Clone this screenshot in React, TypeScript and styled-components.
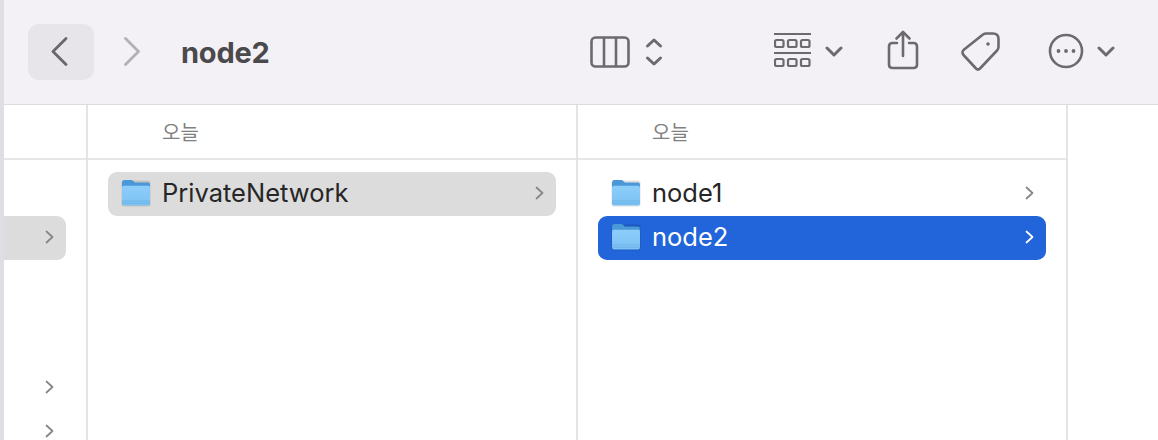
import styled, { createGlobalStyle } from "styled-components";

const GlobalStyle = createGlobalStyle`
  html, body { margin: 0; padding: 0; background: #fff; overflow: hidden; }
  body { font-family: Inter, "Noto Sans CJK KR", sans-serif; }
`;

const Window = styled.div`
  width: 1158px; height: 440px; display: flex; overflow: hidden;
`;

const Edge = styled.div`
  width: 4px; flex: none; background: #e0dee3;
`;

const Main = styled.div`
  flex: 1; min-width: 0; display: flex; flex-direction: column;
`;

const Toolbar = styled.header`
  height: 104px; flex: none; display: flex; align-items: center;
  padding-left: 24px; background: #f3f1f6; border-bottom: 1px solid #dddbdf;
`;

const NavButton = styled.div<{ $active?: boolean }>`
  width: ${p => (p.$active ? 66 : 74)}px; height: 56px; flex: none;
  display: flex; align-items: center; justify-content: center;
  border-radius: 11px; background: ${p => (p.$active ? "#e7e5ea" : "transparent")};
  color: ${p => (p.$active ? "#69676c" : "#b1b0b4")};
`;

const Title = styled.h1`
  flex: 1; margin: 0 0 0 13px; font-size: 29px; font-weight: 700; color: #4a494c;
  letter-spacing: -0.2px;
`;

const ToolIcon = styled.svg<{ $left: number; $weight?: number; $right?: number }>`
  flex: none; height: 44px; margin-left: ${p => p.$left}px; margin-right: ${p => p.$right ?? 0}px;
  color: #6c6a70; fill: none; stroke: currentColor; stroke-width: ${p => p.$weight ?? 2.6};
  stroke-linecap: round; stroke-linejoin: round;
`;

const Browser = styled.div`
  flex: 1; min-height: 0; display: flex;
`;

const Column = styled.section<{ $width: number }>`
  width: ${p => p.$width}px; flex: none; box-sizing: border-box;
  border-right: 2px solid #e4e3e5;
`;

const ColumnHeader = styled.div`
  height: 55px; box-sizing: border-box; padding-left: 74px;
  display: flex; align-items: center;
  border-bottom: 2px solid #e6e6e6;
  font-family: "Noto Sans CJK KR", sans-serif; font-size: 20px; color: #808080;
`;

const RowList = styled.div<{ $narrow?: boolean }>`
  padding: 12px 20px 0 ${p => (p.$narrow ? 0 : 20)}px;
  display: flex; flex-direction: column;
`;

const Row = styled.div<{ $state?: "selected" | "parent"; $narrow?: boolean; $top?: number }>`
  height: 44px; flex: none; box-sizing: border-box; padding: 0 12px 2px 13px;
  margin-top: ${p => p.$top ?? 0}px;
  display: flex; align-items: center;
  border-radius: ${p => (p.$narrow ? "0 9px 9px 0" : "9px")};
  background: ${p => p.$state === "selected" ? "#2264d9" : p.$state === "parent" ? "#dcdcdc" : "transparent"};
  color: ${p => (p.$state === "selected" ? "#ffffff" : "#262626")};
`;

const RowName = styled.span`
  flex: 1; margin-left: 11px; font-size: 25.5px; line-height: 30px;
`;

const Chevron = styled.svg<{ $light?: boolean }>`
  flex: none; margin-left: auto; width: 9px; height: 14px;
  fill: none; stroke: ${p => (p.$light ? "#ffffff" : "#858585")}; stroke-width: 1.7;
  stroke-linecap: round; stroke-linejoin: round;
`;

const RowChevron = ({ light }: { light?: boolean }) => (
    <Chevron $light={light} viewBox="0 0 9 14">
        <path d="M1.5 1.5 L7.5 7 L1.5 12.5" />
    </Chevron>
);

const FolderIcon = ({ id }: { id: string }) => (
    <svg width="30" height="28" viewBox="0 0 30 28" style={{ flex: "none" }}>
        <defs>
            <linearGradient id={`${id}-body`} x1="0" y1="0" x2="0" y2="1">
                <stop offset="0" stopColor="#8ccdfa" />
                <stop offset="1" stopColor="#7cc2f5" />
            </linearGradient>
        </defs>
        <rect x="0.5" y="1.5" width="29" height="26" rx="2.5" fill="#000" opacity="0.12" />
        <path d="M1 4 Q1 1 3.5 1 L10 1 Q11.5 1 12.5 2.2 L13.8 3.6 L27 3.6 Q29 3.6 29 6 L29 10 L1 10 Z" fill="#4a98d8" />
        <path d="M1 8.5 Q1 6.800 3 6.800 L27 6.800 Q29 6.800 29 8.500 L29 24.500 Q29 26.500 27 26.500 L3 26.500 Q1 26.500 1 24.500 Z" fill={`url(#${id}-body)`} />
        <path d="M1 22 H29 M1 24.300 H29" stroke="#64a9de" strokeWidth="0.8" opacity="0.7" />
    </svg>
);

export default function App() {
    return (
        <Window>
            <GlobalStyle />
            <Edge />
            <Main>
                <Toolbar>
                    <NavButton $active>
                        <svg width="20" height="30" viewBox="0 0 20 30" fill="none" stroke="currentColor" strokeWidth="2.8" strokeLinecap="round" strokeLinejoin="round">
                            <path d="M15 1.500 L2 14.500 L15 27.500" />
                        </svg>
                    </NavButton>
                    <NavButton>
                        <svg width="20" height="30" viewBox="0 0 20 30" fill="none" stroke="currentColor" strokeWidth="2.8" strokeLinecap="round" strokeLinejoin="round">
                            <path d="M4.500 1.500 L17.500 14.500 L4.500 27.500" />
                        </svg>
                    </NavButton>
                    <Title>node2</Title>

                    {/* view switcher */}
                    <ToolIcon $left={0} width="40" viewBox="0 0 40 44">
                        <rect x="1.500" y="7.500" width="37" height="29" rx="4" />
                        <path d="M14 8 V36 M26 8 V36" />
                    </ToolIcon>
                    <ToolIcon $left={15} $weight={3} width="18" viewBox="0 0 18 44">
                        <path d="M2.500 16 L9 10 L15.500 16 M2.500 28 L9 34 L15.500 28" />
                    </ToolIcon>

                    {/* group by */}
                    <ToolIcon $left={111} $weight={2.2} width="37" viewBox="0 0 37 44">
                        <path d="M0.500 4 H36.500 M0.500 23 H36.500" />
                        <rect x="1" y="10" width="8.500" height="7" rx="1.500" />
                        <rect x="14" y="10" width="8.500" height="7" rx="1.500" />
                        <rect x="27" y="10" width="8.500" height="7" rx="1.500" />
                        <rect x="1" y="29" width="8.500" height="7" rx="1.500" />
                        <rect x="14" y="29" width="8.500" height="7" rx="1.500" />
                        <rect x="27" y="29" width="8.500" height="7" rx="1.500" />
                    </ToolIcon>
                    <ToolIcon $left={14} $weight={3} width="18" viewBox="0 0 18 44">
                        <path d="M2 18 L9 25 L16 18" />
                    </ToolIcon>

                    {/* share */}
                    <ToolIcon $left={44} width="32" viewBox="0 0 32 44">
                        <path d="M10 13 H5.500 Q2 13 2 16.500 V34.500 Q2 38 5.500 38 H26.500 Q30 38 30 34.500 V16.500 Q30 13 26.500 13 H22" />
                        <path d="M16 26 V2.500 M9.500 8.500 L16 2 L22.500 8.500" />
                    </ToolIcon>

                    {/* tag */}
                    <ToolIcon $left={42} width="40" viewBox="0 0 40 44">
                        <path d="M2.500 20 L22 4.500 Q23.500 3.500 25 3.500 L32 3.500 Q37.500 3.500 37.500 9 L37.500 17 Q37.500 19 36 20.500 L19 38.500 Q17 40.500 15 38.500 L2.500 25 Q0.500 22.500 2.500 20 Z" />
                        <circle cx="27" cy="14" r="1.800" fill="currentColor" stroke="none" />
                    </ToolIcon>

                    {/* more */}
                    <ToolIcon $left={47} width="36" viewBox="0 0 36 44">
                        <circle cx="18" cy="21" r="16" />
                        <circle cx="10.500" cy="21" r="1.900" fill="currentColor" stroke="none" />
                        <circle cx="18" cy="21" r="1.900" fill="currentColor" stroke="none" />
                        <circle cx="25.500" cy="21" r="1.900" fill="currentColor" stroke="none" />
                    </ToolIcon>
                    <ToolIcon $left={13} $right={43} $weight={3} width="18" viewBox="0 0 18 44">
                        <path d="M2 18 L9 25 L16 18" />
                    </ToolIcon>
                </Toolbar>

                <Browser>
                    <Column $width={84}>
                        <ColumnHeader />
                        <RowList $narrow>
                            <Row $narrow $top={44} $state="parent"><RowChevron /></Row>
                            <Row $narrow $top={106}><RowChevron /></Row>
                            <Row $narrow><RowChevron /></Row>
                        </RowList>
                    </Column>
                    <Column $width={490}>
                        <ColumnHeader>오늘</ColumnHeader>
                        <RowList>
                            <Row $state="parent">
                                <FolderIcon id="private" />
                                <RowName>PrivateNetwork</RowName>
                                <RowChevron />
                            </Row>
                        </RowList>
                    </Column>
                    <Column $width={490}>
                        <ColumnHeader>오늘</ColumnHeader>
                        <RowList>
                            <Row>
                                <FolderIcon id="node1" />
                                <RowName>node1</RowName>
                                <RowChevron />
                            </Row>
                            <Row $state="selected">
                                <FolderIcon id="node2" />
                                <RowName>node2</RowName>
                                <RowChevron light />
                            </Row>
                        </RowList>
                    </Column>
                </Browser>
            </Main>
        </Window>
    );
}
